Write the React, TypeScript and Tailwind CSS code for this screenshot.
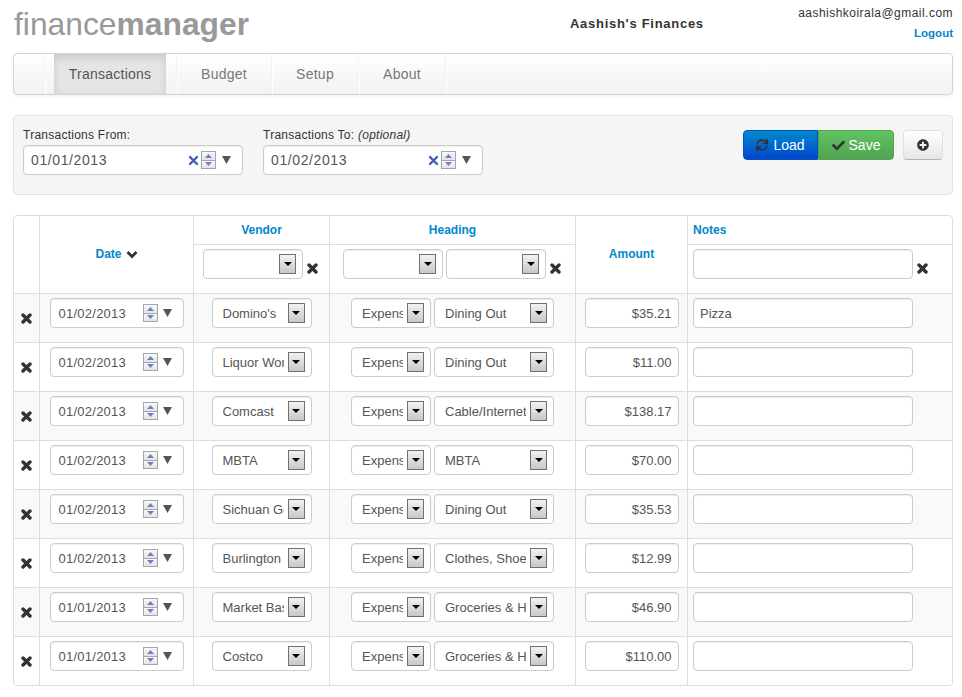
import { FaCheck, FaPlusCircle, FaSync } from "react-icons/fa";

const rows = [
  { date: "01/02/2013", vendor: "Domino's", heading: "Dining Out", amount: "$35.21", notes: "Pizza" },
  { date: "01/02/2013", vendor: "Liquor World", heading: "Dining Out", amount: "$11.00", notes: "" },
  { date: "01/02/2013", vendor: "Comcast", heading: "Cable/Internet", amount: "$138.17", notes: "" },
  { date: "01/02/2013", vendor: "MBTA", heading: "MBTA", amount: "$70.00", notes: "" },
  { date: "01/02/2013", vendor: "Sichuan Gourmet", heading: "Dining Out", amount: "$35.53", notes: "" },
  { date: "01/02/2013", vendor: "Burlington Coat", heading: "Clothes, Shoes", amount: "$12.99", notes: "" },
  { date: "01/01/2013", vendor: "Market Basket", heading: "Groceries & Household", amount: "$46.90", notes: "" },
  { date: "01/01/2013", vendor: "Costco", heading: "Groceries & Household", amount: "$110.00", notes: "" },
];

function RemoveIcon({ blue = false }: { blue?: boolean }) {
  return (
    <svg
      width="11"
      height="11"
      viewBox="0 0 11 11"
      fill="none"
      aria-hidden="true"
      className="shrink-0"
    >
      <path
        d="M2 2l7 7M9 2l-7 7"
        stroke={blue ? "#3b62a8" : "#333333"}
        strokeWidth={blue ? 2.4 : 3.4}
        strokeLinecap="round"
      />
    </svg>
  );
}

function Spinner() {
  return (
    <div className="flex h-[18px] w-[15px] shrink-0 flex-col border border-[#a6a6a6] bg-[#f0f0f0]">
      <div className="flex flex-1 items-center justify-center border-b border-[#a6a6a6] bg-gradient-to-b from-[#f8f8f8] to-[#e4e4e4]">
        <svg width="7" height="4" viewBox="0 0 7 4" aria-hidden="true">
          <path d="M3.5 0L7 4H0z" fill="#6c80c4" />
        </svg>
      </div>
      <div className="flex flex-1 items-center justify-center bg-gradient-to-b from-[#f8f8f8] to-[#e4e4e4]">
        <svg width="7" height="4" viewBox="0 0 7 4" aria-hidden="true">
          <path d="M0 0h7L3.5 4z" fill="#6c80c4" />
        </svg>
      </div>
    </div>
  );
}

function DateField({ value, filter = false }: { value: string; filter?: boolean }) {
  return (
    <div
      className={`flex h-[30px] items-center rounded border border-[#cccccc] bg-white pl-[7px] pr-[11px] text-[#555555] shadow-[inset_0_1px_1px_rgba(0,0,0,0.075)] ${
        filter ? "w-[220px] text-[14px] tracking-[0.6px]" : "w-[134px] pl-[8px] text-[13px] tracking-[0.25px]"
      }`}
    >
      <span className="pt-[1px]">{value}</span>
      <span className="ml-auto flex items-center">
        {filter && (
          <span className="mr-[2px]">
            <RemoveIcon blue />
          </span>
        )}
        <Spinner />
        <svg
          width="9"
          height="8"
          viewBox="0 0 9 8"
          aria-hidden="true"
          className={`mb-[1px] ${filter ? "ml-[6px]" : "ml-[5px]"}`}
        >
          <path d="M0 0h9L4.5 8z" fill="#555555" />
        </svg>
      </span>
    </div>
  );
}

function SelectBox({ value = "", width }: { value?: string; width: string }) {
  return (
    <div
      className={`flex h-[30px] items-center rounded border border-[#cccccc] bg-white pl-[10px] pr-[6px] text-[13px] text-[#555555] shadow-[inset_0_1px_1px_rgba(0,0,0,0.075)] ${width}`}
    >
      <span className="mr-[4px] min-w-0 flex-1 overflow-hidden whitespace-nowrap pt-[1px]">{value}</span>
      <span className="flex h-[20px] w-[17px] shrink-0 items-center justify-center border border-[#707070] bg-gradient-to-b from-[#f2f2f2] to-[#c8c8c8]">
        <svg width="8" height="4" viewBox="0 0 8 4" aria-hidden="true">
          <path d="M0 0h8L4 4z" fill="#000000" />
        </svg>
      </span>
    </div>
  );
}

function TextBox({ value = "", width, right = false }: { value?: string; width: string; right?: boolean }) {
  return (
    <input
      readOnly
      value={value}
      className={`h-[30px] rounded border border-[#cccccc] bg-white px-[6px] font-['Liberation_Sans',sans-serif] text-[13px] text-[#555555] shadow-[inset_0_1px_1px_rgba(0,0,0,0.075)] outline-none ${width} ${
        right ? "text-right" : ""
      }`}
    />
  );
}

function NavItem({ label, width }: { label: string; width: string }) {
  return (
    <a
      className={`flex h-full items-center justify-center border-r border-r-[#f2f2f2] text-[14px] tracking-[0.25px] text-[#777777] shadow-[1px_0_0_#ffffff] ${width}`}
    >
      {label}
    </a>
  );
}

const th = "border-l border-[#dddddd] text-center text-[12px] font-bold text-[#0088cc] align-middle";
const td = "h-[49px] border-l border-t border-[#dddddd] pt-[4px] align-top";

export default function App() {
  return (
    <div className="min-h-[697px] w-[962px] bg-white pb-[10px] pl-[13px] pr-[9px] font-['Liberation_Sans',Arial,sans-serif] text-[#333333]">
      <header className="flex h-[53px]">
        <div className="w-[557px] pl-[1px] pt-[4px] text-[31.8px] leading-[40px] text-[#999999]">
          finance<span className="font-bold">manager</span>
        </div>
        <div className="pt-[16px] text-[13px] font-bold leading-[16px] tracking-[0.72px] text-[#333333]">
          Aashish's Finances
        </div>
        <div className="flex-1 pt-[5px] text-right">
          <div className="text-[12px] leading-[16px] tracking-[0.47px]">aashishkoirala@gmail.com</div>
          <div className="mt-[4px] text-[11.5px] font-bold leading-[16px] text-[#0088cc]">Logout</div>
        </div>
      </header>

      <nav className="flex h-[42px] items-center rounded border border-[#d4d4d4] bg-gradient-to-b from-white to-[#f2f2f2] shadow-[0_1px_3px_rgba(0,0,0,0.065)]">
        <span className="h-full w-[31px] border-r border-r-[#f2f2f2] shadow-[1px_0_0_#ffffff]" />
        <a className="ml-[9px] flex h-full w-[112px] items-center justify-center bg-[#e5e5e5] text-[14px] tracking-[0.25px] text-[#555555] shadow-[inset_0_3px_8px_rgba(0,0,0,0.125)]">
          Transactions
        </a>
        <span className="h-full w-[11px] border-r border-r-[#f2f2f2] shadow-[1px_0_0_#ffffff]" />
        <NavItem label="Budget" width="w-[95px]" />
        <NavItem label="Setup" width="w-[87px]" />
        <NavItem label="About" width="w-[87px]" />
      </nav>

      <section className="mt-[20px] flex h-[80px] rounded border border-[#e3e3e3] bg-[#f5f5f5] px-[9px] pt-[11px]">
        <div className="w-[240px]">
          <div className="mb-[1px] text-[12px] leading-[17px] tracking-[0.25px]">Transactions From:</div>
          <DateField value="01/01/2013" filter />
        </div>
        <div>
          <div className="mb-[1px] text-[12px] leading-[17px] tracking-[0.25px]">
            Transactions To: <em>(optional)</em>
          </div>
          <DateField value="01/02/2013" filter />
        </div>
        <div className="ml-auto mt-[3px] flex h-[30px]">
          <button className="flex w-[75px] items-center justify-center gap-[5px] rounded-l border border-[#0055bb] bg-gradient-to-b from-[#0088cc] to-[#0044cc] text-[14px] text-white">
            <FaSync size={12} color="#333333" />
            Load
          </button>
          <button className="flex w-[76px] items-center justify-center gap-[4px] rounded-r border border-[#51a351] bg-gradient-to-b from-[#62c462] to-[#51a351] text-[14px] text-white">
            <FaCheck size={13} color="#333333" />
            Save
          </button>
          <button className="ml-[9px] flex w-[40px] items-center justify-center rounded border border-[#e0e0e0] border-b-[#b3b3b3] bg-gradient-to-b from-white to-[#e6e6e6]">
            <FaPlusCircle size={12} color="#333333" />
          </button>
        </div>
      </section>

      <div className="mt-[20px] overflow-hidden rounded border border-[#dddddd]">
        <table className="w-[938px] table-fixed border-separate border-spacing-0">
          <colgroup>
            <col className="w-[25px]" />
            <col className="w-[154px]" />
            <col className="w-[136px]" />
            <col className="w-[246px]" />
            <col className="w-[112px]" />
            <col className="w-[265px]" />
          </colgroup>
          <thead>
            <tr className="h-[28px]">
              <th rowSpan={2} />
              <th rowSpan={2} className={`${th} pb-[1px]`}>
                <span className="inline-flex items-center gap-[4px]">
                  Date
                  <svg width="12" height="9" viewBox="0 0 12 9" fill="none" aria-hidden="true">
                    <path d="M1.5 2l4.5 4.5L10.500 2" stroke="#333333" strokeWidth="2.8" />
                  </svg>
                </span>
              </th>
              <th className={th}>Vendor</th>
              <th className={th}>Heading</th>
              <th rowSpan={2} className={`${th} pb-[1px]`}>
                Amount
              </th>
              <th className={`${th} pl-[5px] text-left`}>Notes</th>
            </tr>
            <tr>
              <td className={td}>
                <div className="flex items-center justify-center gap-[4px] pr-[2px]">
                  <SelectBox width="w-[100px]" />
                  <span className="mt-[9px]">
                    <RemoveIcon />
                  </span>
                </div>
              </td>
              <td className={td}>
                <div className="flex items-center justify-center gap-[3px] pr-[1px]">
                  <SelectBox width="w-[100px]" />
                  <SelectBox width="w-[100px]" />
                  <span className="ml-[1px] mt-[9px]">
                    <RemoveIcon />
                  </span>
                </div>
              </td>
              <td className={`${td} pl-[5px]`}>
                <div className="flex items-center gap-[4px]">
                  <TextBox width="w-[220px]" />
                  <span className="mt-[9px]">
                    <RemoveIcon />
                  </span>
                </div>
              </td>
            </tr>
          </thead>
          <tbody>
            {rows.map((row, i) => {
              const bg = i % 2 === 0 ? "bg-[#f9f9f9]" : "bg-white";
              return (
                <tr key={i}>
                  <td className={`h-[49px] border-t border-[#dddddd] pt-[19px] align-top ${bg}`}>
                    <div className="flex justify-center">
                      <RemoveIcon />
                    </div>
                  </td>
                  <td className={`${td} ${bg}`}>
                    <div className="flex justify-center">
                      <DateField value={row.date} />
                    </div>
                  </td>
                  <td className={`${td} ${bg}`}>
                    <div className="flex justify-center">
                      <SelectBox value={row.vendor} width="w-[100px]" />
                    </div>
                  </td>
                  <td className={`${td} ${bg}`}>
                    <div className="flex justify-center gap-[3px]">
                      <SelectBox value="Expense" width="w-[80px]" />
                      <SelectBox value={row.heading} width="w-[120px]" />
                    </div>
                  </td>
                  <td className={`${td} ${bg}`}>
                    <div className="flex justify-center">
                      <TextBox value={row.amount} width="w-[94px]" right />
                    </div>
                  </td>
                  <td className={`${td} pl-[5px] ${bg}`}>
                    <TextBox value={row.notes} width="w-[220px]" />
                  </td>
                </tr>
              );
            })}
          </tbody>
        </table>
      </div>
    </div>
  );
}
